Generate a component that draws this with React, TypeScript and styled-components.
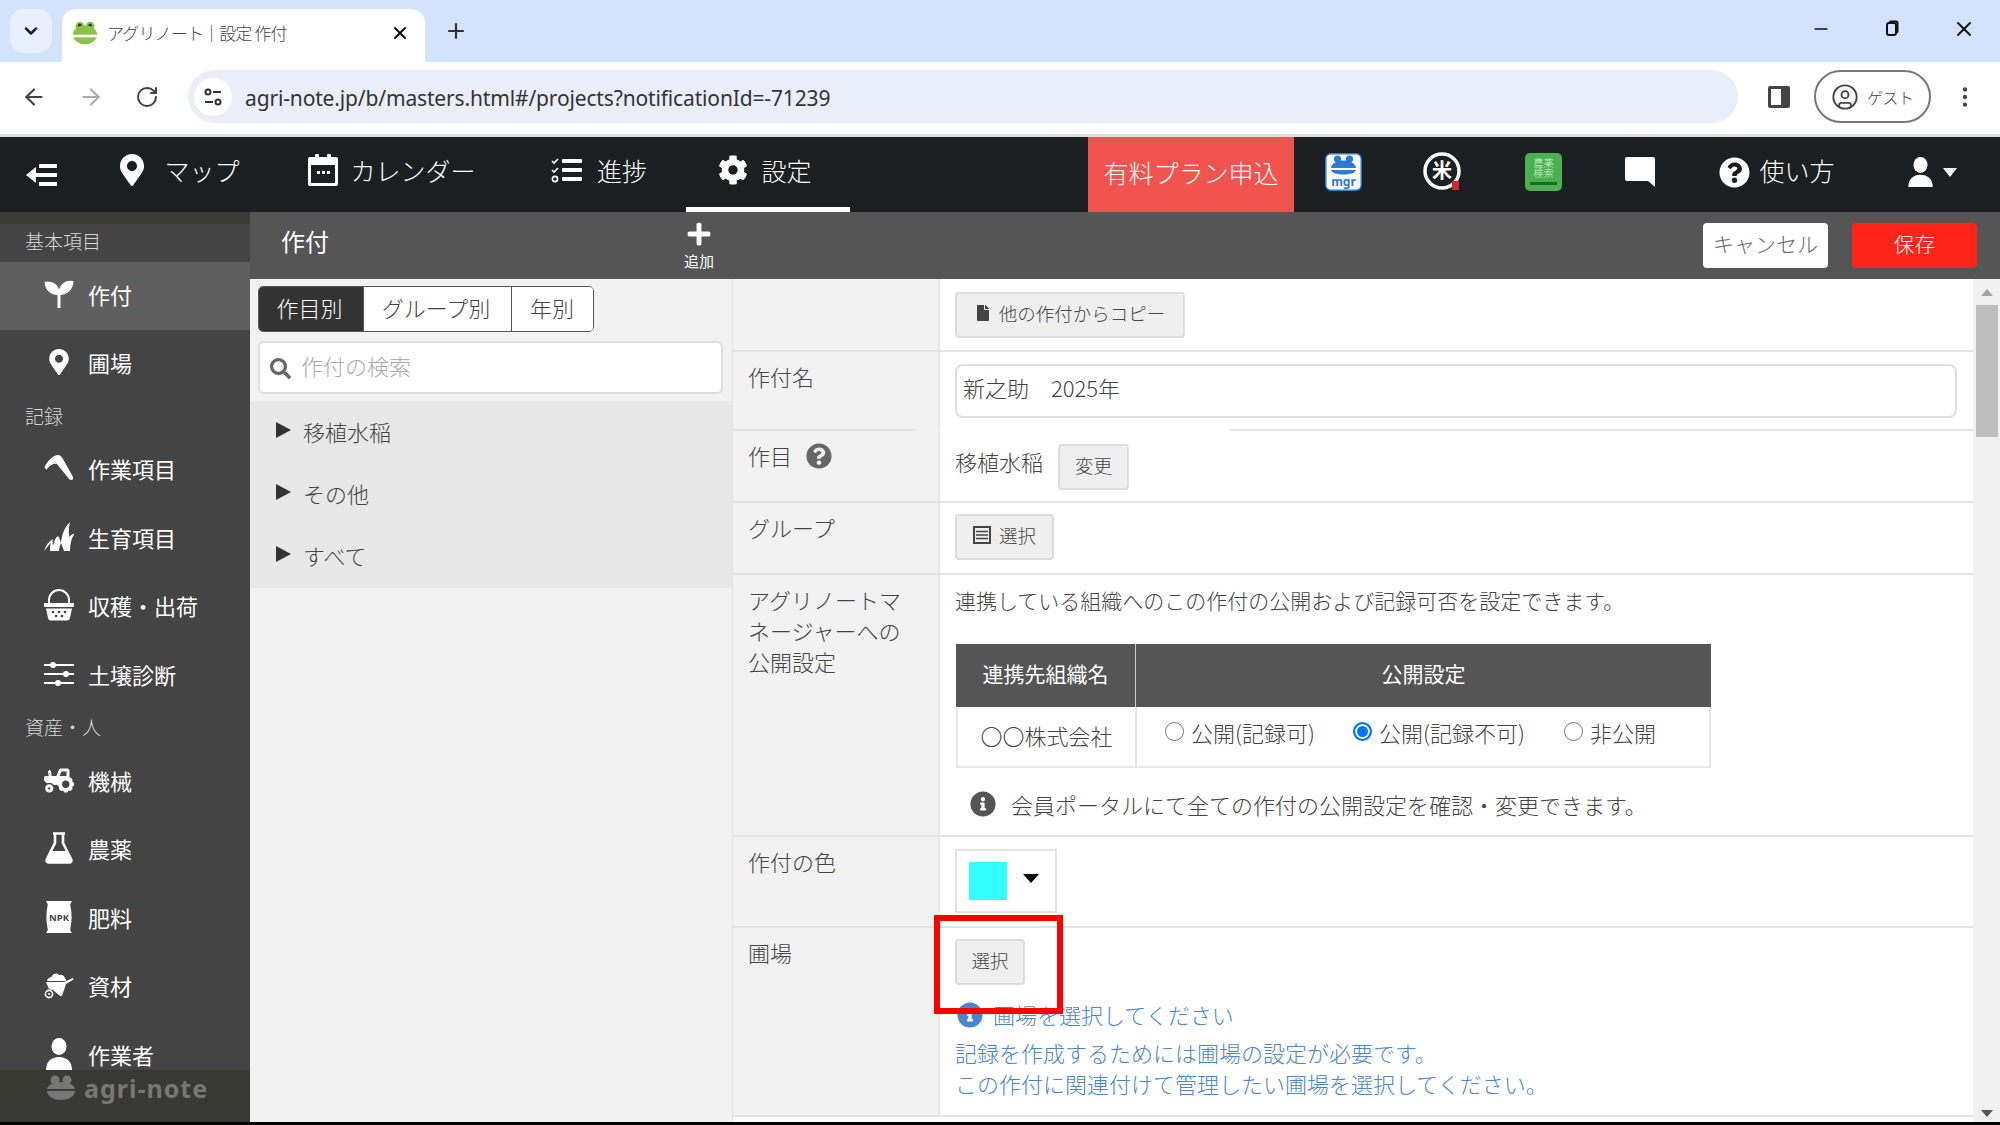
import React from 'react';
import styled, { createGlobalStyle } from 'styled-components';
import { FaCog, FaFile, FaInfoCircle, FaMapMarkerAlt, FaPlus, FaQuestionCircle, FaSearch, FaTractor } from 'react-icons/fa';
import { ArrowLeft, ArrowRight, RotateCw, Plus, X, Minus, ChevronDown, CircleUser, EllipsisVertical } from 'lucide-react';

const JP = `"Noto Sans CJK JP", "Noto Sans", sans-serif`;

const GlobalStyle = createGlobalStyle`
  html, body { margin: 0; padding: 0; width: 2000px; height: 1125px; overflow: hidden; background: #000; }
  body { font-family: ${JP}; color: #444; }
  * { box-sizing: border-box; }
`;

const Page = styled.div`
  width: 2000px;
  height: 1122px;
  display: flex;
  flex-direction: column;
  overflow: hidden;
  background: #fff;
`;

/* browser chrome */
const TabStrip = styled.div`
  height: 62px;
  flex: none;
  background: #d3e3fd;
  display: flex;
  align-items: flex-end;
  padding-left: 10px;
`;
const TabMenu = styled.div`
  width: 42px;
  height: 44px;
  margin-bottom: 9px;
  border-radius: 14px;
  background: #e9f0fd;
  display: flex;
  align-items: center;
  justify-content: center;
  color: #1f1f1f;
`;
const ActiveTab = styled.div`
  width: 363px;
  height: 53px;
  margin-left: 10px;
  background: #fff;
  border-radius: 14px 14px 0 0;
  display: flex;
  align-items: center;
  padding: 0 15px 6px 10px;
  gap: 9px;
  font-size: 17px;
  color: #444;
  font-weight: 300;
`;
const TabTitle = styled.span`
  flex: 1;
  letter-spacing: -0.85px;
`;
const NewTab = styled.div`
  margin: 0 0 11px 19px;
  height: 40px;
  display: flex;
  align-items: center;
  color: #333;
`;
const WindowButtons = styled.div`
  margin-left: auto;
  height: 62px;
  display: flex;
  align-items: center;
  gap: 55px;
  padding: 0 24px 4px 0;
  color: #111;
`;
const RestoreIcon = styled.div`
  width: 11px;
  height: 14px;
  border: 2px solid #111;
  border-radius: 3px;
  box-shadow: 2px -2px 0 -0.5px #111;
`;
const Toolbar = styled.div`
  height: 75px;
  flex: none;
  background: #fff;
  border-bottom: 3px solid #dedede;
  display: flex;
  align-items: center;
  padding: 0 0 3px 21px;
`;
const ToolIcons = styled.div`
  display: flex;
  align-items: center;
  gap: 31px;
  width: 167px;
  color: #444;
`;
const AddressBar = styled.div`
  width: 1550px;
  height: 53px;
  border-radius: 27px;
  background: #e9eef8;
  display: flex;
  align-items: center;
  padding-left: 6px;
`;
const SiteChip = styled.div`
  width: 38px;
  height: 38px;
  border-radius: 50%;
  background: #fff;
  display: flex;
  align-items: center;
  justify-content: center;
  margin-right: 13px;
`;
const Url = styled.span`
  font-family: "Noto Sans", sans-serif;
  font-size: 21px;
  color: #333;
  letter-spacing: -0.15px;
  padding-top: 2px;
`;
const PanelIcon = styled.div`
  width: 22px;
  height: 22px;
  margin-left: 30px;
  border: 3px solid #444;
  border-right-width: 9px;
  border-radius: 2px;
`;
const GuestChip = styled.div`
  width: 117px;
  height: 53px;
  margin-left: 24px;
  border: 2px solid #777;
  border-radius: 27px;
  display: flex;
  align-items: center;
  padding-left: 15px;
  gap: 8px;
  font-size: 16px;
  font-weight: 300;
  letter-spacing: -0.5px;
  color: #444;
`;
const MoreBox = styled.div`
  margin-left: 21px;
  display: flex;
  color: #444;
`;

/* app nav */
const NavBar = styled.div`
  height: 75px;
  flex: none;
  background: #1c1f21;
  color: #fff;
  display: flex;
  align-items: stretch;
`;
const NavBack = styled.div`
  width: 84px;
  display: flex;
  align-items: center;
  padding-left: 25px;
`;
const NavItem = styled.div<{ $w: number; $gap: number; $shift?: number; $active?: boolean }>`
  width: ${(p) => p.$w}px;
  display: flex;
  align-items: center;
  justify-content: center;
  gap: ${(p) => p.$gap}px;
  font-size: 25px;
  font-weight: 300;
  padding: 0 ${(p) => p.$shift ?? 0}px 5px 0;
  border-bottom: 5px solid ${(p) => (p.$active ? '#fff' : 'transparent')};
`;
const PlanButton = styled.div`
  width: 206px;
  margin-left: 238px;
  padding-bottom: 6px;
  background: #f1534f;
  display: flex;
  align-items: center;
  justify-content: center;
  font-size: 25px;
  font-weight: 300;
  white-space: nowrap;
`;
const NavIconSlot = styled.div<{ $w: number; $gap?: number }>`
  width: ${(p) => p.$w}px;
  display: flex;
  align-items: center;
  justify-content: center;
  gap: ${(p) => p.$gap ?? 12}px;
  font-size: 25px;
  font-weight: 300;
  padding-bottom: 5px;
`;
const HelpLabel = styled.span`
  padding-bottom: 4px;
`;
const NavCaret = styled.div`
  width: 0;
  height: 0;
  border-top: 9px solid #fff;
  border-left: 7px solid transparent;
  border-right: 7px solid transparent;
  margin-left: -2px;
`;

/* body */
const Body = styled.div`
  flex: 1;
  min-height: 0;
  display: flex;
  position: relative;
`;
const Sidebar = styled.div`
  width: 250px;
  flex: none;
  background: #444;
  color: #fff;
  position: relative;
  overflow: hidden;
  padding-top: 12px;
  box-shadow: inset 0 12px 0 #3c3c36;
`;
const SideHead = styled.div`
  height: 38px;
  padding-left: 25px;
  font-size: 19px;
  font-weight: 300;
  line-height: 33px;
  color: #d8d8d8;
`;
const SideRow = styled.div<{ $active?: boolean }>`
  height: 68.4px;
  display: flex;
  align-items: center;
  gap: 14px;
  padding: 0 0 5px 44px;
  font-size: 22px;
  font-weight: 400;
  background: ${(p) => (p.$active ? '#5f5f5f' : 'transparent')};
`;
const SideIconBox = styled.div`
  width: 30px;
  height: 32px;
  display: flex;
  align-items: center;
  justify-content: center;
`;
const FlippedTractor = styled(FaTractor)`
  transform: scaleX(-1);
`;
const SideFooter = styled.div`
  position: absolute;
  left: 0;
  right: 0;
  bottom: 0;
  height: 52px;
  background: rgba(56, 56, 50, 0.93);
  display: flex;
  align-items: center;
  padding: 0 0 16px 46px;
  gap: 8px;
  color: #777;
  font-family: "Noto Sans", sans-serif;
  font-weight: 700;
  font-size: 25px;
  letter-spacing: 1px;
`;

const Content = styled.div`
  flex: 1;
  min-width: 0;
  display: flex;
  flex-direction: column;
`;
const SubHeader = styled.div`
  height: 67px;
  flex: none;
  background: #555;
  color: #fff;
  display: flex;
  align-items: center;
  padding: 0 23px 0 31px;
`;
const SubTitle = styled.div`
  width: 393px;
  font-size: 24px;
  font-weight: 400;
  padding-bottom: 10px;
`;
const AddAction = styled.div`
  width: 50px;
  display: flex;
  flex-direction: column;
  align-items: center;
  font-size: 15px;
  line-height: 20px;
  gap: 4px;
`;
const HeaderButton = styled.div<{ $primary?: boolean }>`
  width: 125px;
  height: 45px;
  padding-bottom: 6px;
  margin-left: ${(p) => (p.$primary ? '24px' : 'auto')};
  border-radius: 4px;
  background: ${(p) => (p.$primary ? '#ff2318' : '#fff')};
  color: ${(p) => (p.$primary ? '#fff' : '#666')};
  font-size: 21px;
  display: flex;
  align-items: center;
  justify-content: center;
  font-weight: 300;
`;
const Split = styled.div`
  flex: 1;
  min-height: 0;
  display: flex;
`;
const ListPanel = styled.div`
  width: 483px;
  flex: none;
  background: #f2f2f2;
  padding-top: 7px;
  border-right: 1px solid #e2e2e2;
`;
const TabGroup = styled.div`
  width: 336px;
  height: 46px;
  margin-left: 8px;
  border: 1px solid #555;
  border-radius: 5px;
  overflow: hidden;
  display: flex;
  background: #fff;
`;
const TabButton = styled.div<{ $w: number; $active?: boolean }>`
  width: ${(p) => p.$w}px;
  flex: none;
  display: flex;
  align-items: center;
  justify-content: center;
  padding: 0 3px 4px 0;
  font-size: 22px;
  font-weight: 300;
  background: ${(p) => (p.$active ? '#333' : '#fff')};
  color: ${(p) => (p.$active ? '#fff' : '#444')};
  border-right: 1px solid #555;
  &:last-child { border-right: none; }
`;
const SearchBox = styled.div`
  width: 465px;
  height: 53px;
  margin: 9px 0 7px 8px;
  background: #fff;
  border: 2px solid #dedede;
  border-radius: 6px;
  display: flex;
  align-items: center;
  gap: 10px;
  padding: 0 0 6px 10px;
  color: #aaa;
  font-size: 22px;
  font-weight: 300;
`;
const SearchGlyph = styled(FaSearch)`
  margin-top: 7px;
`;
const CropList = styled.div`
  height: 187px;
  background: #e8e8e8;
`;
const CropItem = styled.div`
  height: 62px;
  display: flex;
  align-items: center;
  padding: 0 0 3px 26px;
  gap: 12px;
  font-size: 22px;
  font-weight: 300;
  color: #444;
`;
const Caret = styled.div`
  width: 0;
  height: 0;
  border-left: 15px solid #333;
  border-top: 8px solid transparent;
  border-bottom: 8px solid transparent;
  margin-top: -1px;
`;
const Form = styled.div`
  flex: 1;
  min-width: 0;
  display: flex;
  flex-direction: column;
`;
const Row = styled.div<{ $h: number }>`
  height: ${(p) => p.$h}px;
  flex: none;
  display: flex;
  position: relative;
  border-bottom: 2px solid #e4e4e4;
`;
/* the reference loses this stretch of the row rule under the name input */
const RuleGap = styled.div`
  position: absolute;
  left: 182px;
  bottom: -2px;
  width: 315px;
  height: 2px;
  background: linear-gradient(to right, #f2f2f2 25px, #fff 25px);
`;
const RowLabel = styled.div`
  width: 207px;
  flex: none;
  background: #f2f2f2;
  padding: 9px 0 0 15px;
  font-size: 22px;
  font-weight: 300;
  line-height: 31px;
  color: #444;
  border-right: 2px solid #e8e8e8;
`;
const LabelInline = styled.span`
  display: inline-flex;
  align-items: center;
  gap: 14px;
`;
const RowValue = styled.div<{ $top?: number }>`
  flex: 1;
  min-width: 0;
  padding: ${(p) => p.$top ?? 13}px 0 0 15px;
  font-size: 22px;
  font-weight: 300;
  color: #444;
  position: relative;
`;
const GrayButton = styled.div<{ $w: number }>`
  width: ${(p) => p.$w}px;
  height: 46px;
  padding-bottom: 5px;
  background: #efefef;
  border: 2px solid #dcdcdc;
  border-radius: 4px;
  display: inline-flex;
  align-items: center;
  justify-content: center;
  gap: 8px;
  font-size: 18.5px;
  font-weight: 300;
  color: #444;
`;
const NameInput = styled.div`
  width: 1002px;
  height: 54px;
  border: 2px solid #dedede;
  border-radius: 8px;
  display: flex;
  align-items: center;
  padding: 0 0 8px 6px;
  font-size: 22px;
`;
const Inline = styled.div`
  display: flex;
  align-items: center;
  gap: 15px;
`;
const InlineText = styled.span`
  padding-bottom: 12px;
`;
const AgriIntro = styled.div`
  line-height: 31px;
  margin-top: -3px;
  font-size: 21px;
`;
const OrgTable = styled.div`
  width: 755px;
  margin: 28px 0 0 1px;
  display: grid;
  grid-template-columns: 179px 1fr;
  grid-template-rows: 63px 61px;
`;
const OrgHead = styled.div`
  background: #555;
  color: #fff;
  display: flex;
  align-items: center;
  justify-content: center;
  padding-bottom: 6px;
  font-size: 21px;
  font-weight: 400;
  & + & { border-left: 1px solid #ccc; }
`;
const OrgCell = styled.div`
  display: flex;
  align-items: center;
  justify-content: center;
  padding-bottom: 4px;
  font-size: 22px;
  border-left: 2px solid #e6e6e6;
  border-bottom: 2px solid #e6e6e6;
`;
const RadioCell = styled.div`
  border-left: 2px solid #e6e6e6;
  border-right: 2px solid #e6e6e6;
  border-bottom: 2px solid #e6e6e6;
  display: flex;
  align-items: center;
  padding: 0 0 9px 28px;
  font-size: 22px;
`;
const RadioOption = styled.label<{ $w: number }>`
  width: ${(p) => p.$w}px;
  display: flex;
  align-items: center;
  gap: 7px;
`;
const Radio = styled.span<{ $on?: boolean }>`
  width: 19px;
  height: 19px;
  flex: none;
  border-radius: 50%;
  margin-top: -2px;
  border: ${(p) => (p.$on ? '2px solid #0075ff' : '1.5px solid #767676')};
  background: ${(p) => (p.$on ? '#0075ff' : '#fff')};
  box-shadow: ${(p) => (p.$on ? 'inset 0 0 0 2px #fff' : 'none')};
`;
const NoteLine = styled.div`
  display: flex;
  align-items: center;
  gap: 15px;
  margin: 22px 0 0 15px;
  line-height: 28px;
`;
const ColorPicker = styled.div`
  width: 102px;
  height: 64px;
  border: 2px solid #e2e2e2;
  margin-top: -1px;
  display: flex;
  align-items: center;
  padding-left: 12px;
  gap: 16px;
`;
const Swatch = styled.div`
  width: 38px;
  height: 38px;
  background: #33ffff;
`;
const DownCaret = styled.div`
  width: 0;
  height: 0;
  border-top: 9px solid #000;
  border-left: 8px solid transparent;
  border-right: 8px solid transparent;
  margin-top: -6px;
`;
const BlueNote = styled.div`
  color: #4a86d0;
  margin-top: 14px;
  line-height: 31px;
`;
const BlueHead = styled.div`
  display: flex;
  align-items: center;
  gap: 10px;
  margin: 0 0 7px 2px;
`;
const Callout = styled.div`
  position: absolute;
  left: -6px;
  top: -13px;
  width: 129px;
  height: 99px;
  border: 6px solid #ff0000;
  pointer-events: none;
`;
const Scrollbar = styled.div`
  width: 27px;
  flex: none;
  background: #f1f1f1;
  display: flex;
  flex-direction: column;
  align-items: center;
  padding-top: 10px;
`;
const ScrollArrow = styled.div<{ $down?: boolean }>`
  width: 0;
  height: 0;
  border-left: 6px solid transparent;
  border-right: 6px solid transparent;
  ${(p) => (p.$down ? 'border-top: 7px solid #555; margin-top: auto; margin-bottom: 5px;' : 'border-bottom: 7px solid #a3a3a3;')}
`;
const ScrollThumb = styled.div`
  width: 22px;
  height: 132px;
  margin-top: 9px;
  background: #bdbdbd;
`;

/* drawings */
const Frog = ({ size = 26 }: { size?: number }) => (
  <svg width={size} height={size} viewBox="0 0 30 30">
    <circle cx="9" cy="7" r="5" fill="#8bc34a" />
    <circle cx="21" cy="7" r="5" fill="#8bc34a" />
    <circle cx="9" cy="6" r="2" fill="#333" />
    <circle cx="21" cy="6" r="2" fill="#333" />
    <ellipse cx="15" cy="17" rx="14" ry="11" fill="#8bc34a" />
    <rect x="1" y="17" width="28" height="3" fill="#fff" />
  </svg>
);
const SideToggle = () => (
  <svg width="34" height="26" viewBox="0 0 34 26" fill="#fff">
    <rect x="14" y="2" width="18" height="4" />
    <rect x="8" y="11" width="24" height="4" />
    <rect x="14" y="20" width="18" height="4" />
    <path d="M1 13 L11 5 V21 Z" />
  </svg>
);
const CalendarIcon = () => (
  <svg width="30" height="32" viewBox="0 0 30 32" fill="#fff">
    <rect x="7" y="0" width="4" height="6" rx="1" />
    <rect x="19" y="0" width="4" height="6" rx="1" />
    <path fillRule="evenodd" d="M2 3h26a2 2 0 0 1 2 2v25a2 2 0 0 1-2 2H2a2 2 0 0 1-2-2V5a2 2 0 0 1 2-2zM3 11v18h24V11z" />
    <rect x="9" y="17" width="3" height="3" />
    <rect x="14" y="17" width="3" height="3" />
    <rect x="19" y="17" width="3" height="3" />
  </svg>
);
const ChecklistIcon = () => (
  <svg width="31" height="26" viewBox="0 0 31 26" fill="none" stroke="#fff">
    <path d="M1 4l2 2 4-4M1 13l2 2 4-4" strokeWidth="1.6" />
    <circle cx="4" cy="22" r="2.6" strokeWidth="1.6" />
    <rect x="11" y="2" width="20" height="4" rx="1" fill="#fff" strokeWidth="0" />
    <rect x="11" y="11" width="20" height="4" rx="1" fill="#fff" strokeWidth="0" />
    <rect x="11" y="20" width="20" height="4" rx="1" fill="#fff" strokeWidth="0" />
  </svg>
);
const MgrBadge = () => (
  <svg width="37" height="38" viewBox="0 0 37 38">
    <rect x=".8" y=".8" width="35.400" height="36.400" rx="5" fill="#fff" stroke="#2a7ad6" strokeWidth="1.5" />
    <circle cx="12.500" cy="6" r="3.600" fill="#2a7ad6" />
    <circle cx="24.500" cy="6" r="3.600" fill="#2a7ad6" />
    <path d="M6 15 C7 5 30 5 31 15 Z" fill="#2a7ad6" />
    <path d="M6 17 H31 C30 23 7 23 6 17 Z" fill="#2a7ad6" />
    <text x="18.500" y="33" textAnchor="middle" fontSize="12" fontWeight="700" fill="#2a7ad6" fontFamily="Noto Sans">mgr</text>
  </svg>
);
const RiceBadge = () => (
  <svg width="40" height="40" viewBox="0 0 40 40">
    <circle cx="19" cy="19" r="17" fill="#1c1f21" stroke="#fff" strokeWidth="3.500" />
    <text x="19" y="26" textAnchor="middle" fontSize="20" fontWeight="700" fill="#fff" fontFamily="Noto Sans CJK JP">米</text>
    <rect x="29" y="29" width="7" height="9" fill="#d9252a" />
  </svg>
);
const BookBadge = () => (
  <svg width="37" height="38" viewBox="0 0 37 38">
    <rect width="37" height="38" rx="5" fill="#4caf50" />
    <text x="18.500" y="14" textAnchor="middle" fontSize="10" fill="#d9f2da" fontFamily="Noto Sans CJK JP">農薬</text>
    <text x="18.500" y="24" textAnchor="middle" fontSize="10" fill="#d9f2da" fontFamily="Noto Sans CJK JP">検索</text>
    <rect x="5" y="29" width="27" height="3" fill="#1d6b22" />
  </svg>
);
const Bubble = () => (
  <svg width="32" height="32" viewBox="0 0 32 32" fill="#fff">
    <path d="M3 1H29a2 2 0 0 1 2 2V31L24 25H3a2 2 0 0 1-2-2V3a2 2 0 0 1 2-2z" />
  </svg>
);
const Person = ({ w = 26, h = 32 }: { w?: number; h?: number }) => (
  <svg width={w} height={h} viewBox="0 0 26 32" fill="#fff">
    <ellipse cx="13" cy="8.500" rx="7.500" ry="8.500" />
    <path d="M0 32C0 24 5 19 13 19s13 5 13 13z" />
  </svg>
);
const ListBox = () => (
  <svg width="18" height="18" viewBox="0 0 18 18" fill="none" stroke="#444">
    <rect x="1" y="1" width="16" height="16" strokeWidth="2" />
    <path d="M3 5.500H15M3 9H15M3 12.500H15" strokeWidth="1.600" />
  </svg>
);
const Sprout = () => (
  <svg width="32" height="30" viewBox="0 0 32 30" fill="#fff">
    <path d="M14.400 30V16C8 16 1 12 .5 2c6-.6 13 0 15.500 8.500C18.500 2 26-.4 31.500 1.500 31 11 24 16 17.600 16v14z" />
  </svg>
);
const Hoe = () => (
  <svg width="30" height="28" viewBox="0 0 30 28" fill="#fff">
    <path d="M1 12C5 5 10 1 14 1c2 0 3 1 5 4l10 18c1 3-2 4-4 2L13 10C10 9 6 11 3 15c-1 1-3-1-2-3z" />
  </svg>
);
const Grass = () => (
  <svg width="30" height="30" viewBox="0 0 30 30" fill="#fff">
    <path d="M0 29C2 23 5 19 9 17c-.5 2-.5 5 0 7 1-4 2-8 5-10 2 3 3 6 3 9 0-7 2-16 9-23-1.500 6-1.500 11-.5 15 1-2 3-3 5.500-4-3 4-5 10-5 18h-6c-1-3-2-6-3-8-1 3-2 5-2 8H6c0-3 0-6 1-8-3 2-4 5-7 8z" />
  </svg>
);
const Basket = () => (
  <svg width="30" height="32" viewBox="0 0 30 32">
    <path d="M5 14V11a10 10 0 0 1 20 0v3" fill="none" stroke="#fff" strokeWidth="2" />
    <rect x="0" y="14" width="30" height="4" rx="1" fill="#fff" />
    <path d="M2 19.500H28L26 29a3 3 0 0 1-3 2.500H7A3 3 0 0 1 4 29z" fill="#fff" />
    <g fill="#444">
      <circle cx="9" cy="23" r="1.300" /><circle cx="15" cy="23" r="1.300" /><circle cx="21" cy="23" r="1.300" />
      <circle cx="12" cy="27" r="1.300" /><circle cx="18" cy="27" r="1.300" />
    </g>
  </svg>
);
const Sliders = () => (
  <svg width="30" height="24" viewBox="0 0 30 24" fill="#fff">
    <rect y="2" width="30" height="2" /><circle cx="9" cy="3" r="3" />
    <rect y="11" width="30" height="2" /><circle cx="22" cy="12" r="3" />
    <rect y="20" width="30" height="2" /><circle cx="14" cy="21" r="3" />
  </svg>
);
const Flask = () => (
  <svg width="28" height="32" viewBox="0 0 28 32" fill="none">
    <path d="M8 1.500H20M10 2V11L2 27c-1 2 0 3.500 2 3.500H24c2 0 3-1.500 2-3.500L18 11V2" stroke="#fff" strokeWidth="2.600" />
    <path d="M7 19H21L26 28c.5 2 0 3-2 3H4c-2 0-2.500-1-2-3z" fill="#fff" />
  </svg>
);
const NpkBag = () => (
  <svg width="28" height="32" viewBox="0 0 28 32">
    <path d="M1 0H27C25 3 25 4 25.500 5 27 12 27 20 25.500 27 25 28 25 30 27 32H1C3 30 3 28 2.500 27 1 20 1 12 2.500 5 3 4 3 3 1 0z" fill="#fff" />
    <text x="14" y="20" textAnchor="middle" fontSize="9.500" fontWeight="700" fill="#444" fontFamily="Noto Sans">NPK</text>
  </svg>
);
const Barrow = () => (
  <svg width="30" height="27" viewBox="0 0 30 27" fill="#fff">
    <path d="M3 9C4 5 7 6 8 4c2-3 5-3 7-1 2-1 5 0 6 3 1 1 1 2 1 3z" />
    <path d="M2 10H20L29 6l.500 1.500L22 12 18 24h-2L9 18 5 17z" />
    <circle cx="5" cy="22" r="3.600" fill="none" stroke="#fff" strokeWidth="1.600" />
    <circle cx="5" cy="22" r="1" />
  </svg>
);
const TuneIcon = () => (
  <svg width="20" height="20" viewBox="0 0 20 20" fill="none" stroke="#333" strokeWidth="2">
    <circle cx="5" cy="5" r="2.500" /><path d="M10 5h8M2 15h8" /><circle cx="15" cy="15" r="2.500" />
  </svg>
);

const sideSections = [
  { head: '基本項目', rows: [
    { label: '作付', icon: <Sprout />, active: true },
    { label: '圃場', icon: <FaMapMarkerAlt size={26} /> },
  ] },
  { head: '記録', rows: [
    { label: '作業項目', icon: <Hoe /> },
    { label: '生育項目', icon: <Grass /> },
    { label: '収穫・出荷', icon: <Basket /> },
    { label: '土壌診断', icon: <Sliders /> },
  ] },
  { head: '資産・人', rows: [
    { label: '機械', icon: <FlippedTractor size={31} /> },
    { label: '農薬', icon: <Flask /> },
    { label: '肥料', icon: <NpkBag /> },
    { label: '資材', icon: <Barrow /> },
    { label: '作業者', icon: <Person /> },
  ] },
];

export default function App() {
  return (
    <Page>
      <GlobalStyle />
      <TabStrip>
        <TabMenu><ChevronDown size={20} strokeWidth={3} /></TabMenu>
        <ActiveTab>
          <Frog />
          <TabTitle>アグリノート｜設定 作付</TabTitle>
          <X size={20} strokeWidth={2.5} color="#111" />
        </ActiveTab>
        <NewTab><Plus size={24} strokeWidth={2.2} /></NewTab>
        <WindowButtons>
          <Minus size={20} />
          <RestoreIcon />
          <X size={24} />
        </WindowButtons>
      </TabStrip>
      <Toolbar>
        <ToolIcons>
          <ArrowLeft size={26} />
          <ArrowRight size={26} color="#aaa" />
          <RotateCw size={24} />
        </ToolIcons>
        <AddressBar>
          <SiteChip><TuneIcon /></SiteChip>
          <Url>agri-note.jp/b/masters.html#/projects?notificationId=-71239</Url>
        </AddressBar>
        <PanelIcon />
        <GuestChip><CircleUser size={28} strokeWidth={1.6} />ゲスト</GuestChip>
        <MoreBox><EllipsisVertical size={26} /></MoreBox>
      </Toolbar>
      <NavBar>
        <NavBack><SideToggle /></NavBack>
        <NavItem $w={188} $gap={16}><FaMapMarkerAlt size={32} />マップ</NavItem>
        <NavItem $w={240} $gap={12}><CalendarIcon />カレンダー</NavItem>
        <NavItem $w={174} $gap={15}><ChecklistIcon />進捗</NavItem>
        <NavItem $w={164} $gap={13} $shift={6} $active><FaCog size={30} />設定</NavItem>
        <PlanButton>有料プラン申込</PlanButton>
        <NavIconSlot $w={98}><MgrBadge /></NavIconSlot>
        <NavIconSlot $w={102}><RiceBadge /></NavIconSlot>
        <NavIconSlot $w={98}><BookBadge /></NavIconSlot>
        <NavIconSlot $w={96}><Bubble /></NavIconSlot>
        <NavIconSlot $w={178} $gap={9}><FaQuestionCircle size={31} /><HelpLabel>使い方</HelpLabel></NavIconSlot>
        <NavIconSlot $w={132}><Person w={25} h={30} /><NavCaret /></NavIconSlot>
      </NavBar>
      <Body>
        <Sidebar>
          {sideSections.map((s) => (
            <React.Fragment key={s.head}>
              <SideHead>{s.head}</SideHead>
              {s.rows.map((r: { label: string; icon: React.ReactNode; active?: boolean }) => (
                <SideRow key={r.label} $active={r.active}>
                  <SideIconBox>{r.icon}</SideIconBox>
                  {r.label}
                </SideRow>
              ))}
            </React.Fragment>
          ))}
          <SideFooter>
            <svg width="30" height="26" viewBox="0 0 30 26" fill="#777">
              <circle cx="9" cy="5" r="4.500" /><circle cx="21" cy="5" r="4.500" />
              <path d="M1 14C2 5 28 5 29 14z" /><path d="M1 16H29C28 28 2 28 1 16z" />
            </svg>
            agri-note
          </SideFooter>
        </Sidebar>
        <Content>
          <SubHeader>
            <SubTitle>作付</SubTitle>
            <AddAction><FaPlus size={26} />追加</AddAction>
            <HeaderButton>キャンセル</HeaderButton>
            <HeaderButton $primary>保存</HeaderButton>
          </SubHeader>
          <Split>
            <ListPanel>
              <TabGroup>
                <TabButton $w={105} $active>作目別</TabButton>
                <TabButton $w={148}>グループ別</TabButton>
                <TabButton $w={83}>年別</TabButton>
              </TabGroup>
              <SearchBox><SearchGlyph size={21} color="#666" />作付の検索</SearchBox>
              <CropList>
                {['移植水稲', 'その他', 'すべて'].map((c) => (
                  <CropItem key={c}><Caret />{c}</CropItem>
                ))}
              </CropList>
            </ListPanel>
            <Form>
              <Row $h={73}>
                <RowLabel />
                <RowValue><GrayButton $w={230}><FaFile size={16} color="#444" />他の作付からコピー</GrayButton></RowValue>
              </Row>
              <Row $h={79}>
                <RowLabel>作付名</RowLabel>
                <RowValue $top={12}><NameInput>新之助　2025年</NameInput></RowValue>
                <RuleGap />
              </Row>
              <Row $h={72}>
                <RowLabel><LabelInline>作目<FaQuestionCircle size={26} color="#666" /></LabelInline></RowLabel>
                <RowValue><Inline><InlineText>移植水稲</InlineText><GrayButton $w={71}>変更</GrayButton></Inline></RowValue>
              </Row>
              <Row $h={72}>
                <RowLabel>グループ</RowLabel>
                <RowValue $top={11}><GrayButton $w={99}><ListBox />選択</GrayButton></RowValue>
              </Row>
              <Row $h={262}>
                <RowLabel>アグリノートマ<br />ネージャーへの<br />公開設定</RowLabel>
                <RowValue>
                  <AgriIntro>連携している組織へのこの作付の公開および記録可否を設定できます。</AgriIntro>
                  <OrgTable>
                    <OrgHead>連携先組織名</OrgHead>
                    <OrgHead>公開設定</OrgHead>
                    <OrgCell>〇〇株式会社</OrgCell>
                    <RadioCell>
                      <RadioOption $w={188}><Radio />公開(記録可)</RadioOption>
                      <RadioOption $w={211}><Radio $on />公開(記録不可)</RadioOption>
                      <RadioOption $w={100}><Radio />非公開</RadioOption>
                    </RadioCell>
                  </OrgTable>
                  <NoteLine><FaInfoCircle size={26} color="#555" />会員ポータルにて全ての作付の公開設定を確認・変更できます。</NoteLine>
                </RowValue>
              </Row>
              <Row $h={91}>
                <RowLabel>作付の色</RowLabel>
                <RowValue><ColorPicker><Swatch /><DownCaret /></ColorPicker></RowValue>
              </Row>
              <Row $h={189}>
                <RowLabel>圃場</RowLabel>
                <RowValue $top={11}>
                  <GrayButton $w={70}>選択</GrayButton>
                  <BlueNote>
                    <BlueHead><FaInfoCircle size={26} color="#4a86d0" />圃場を選択してください</BlueHead>
                    記録を作成するためには圃場の設定が必要です。<br />
                    この作付に関連付けて管理したい圃場を選択してください。
                  </BlueNote>
                  <Callout />
                </RowValue>
              </Row>
            </Form>
            <Scrollbar>
              <ScrollArrow />
              <ScrollThumb />
              <ScrollArrow $down />
            </Scrollbar>
          </Split>
        </Content>
      </Body>
    </Page>
  );
}
